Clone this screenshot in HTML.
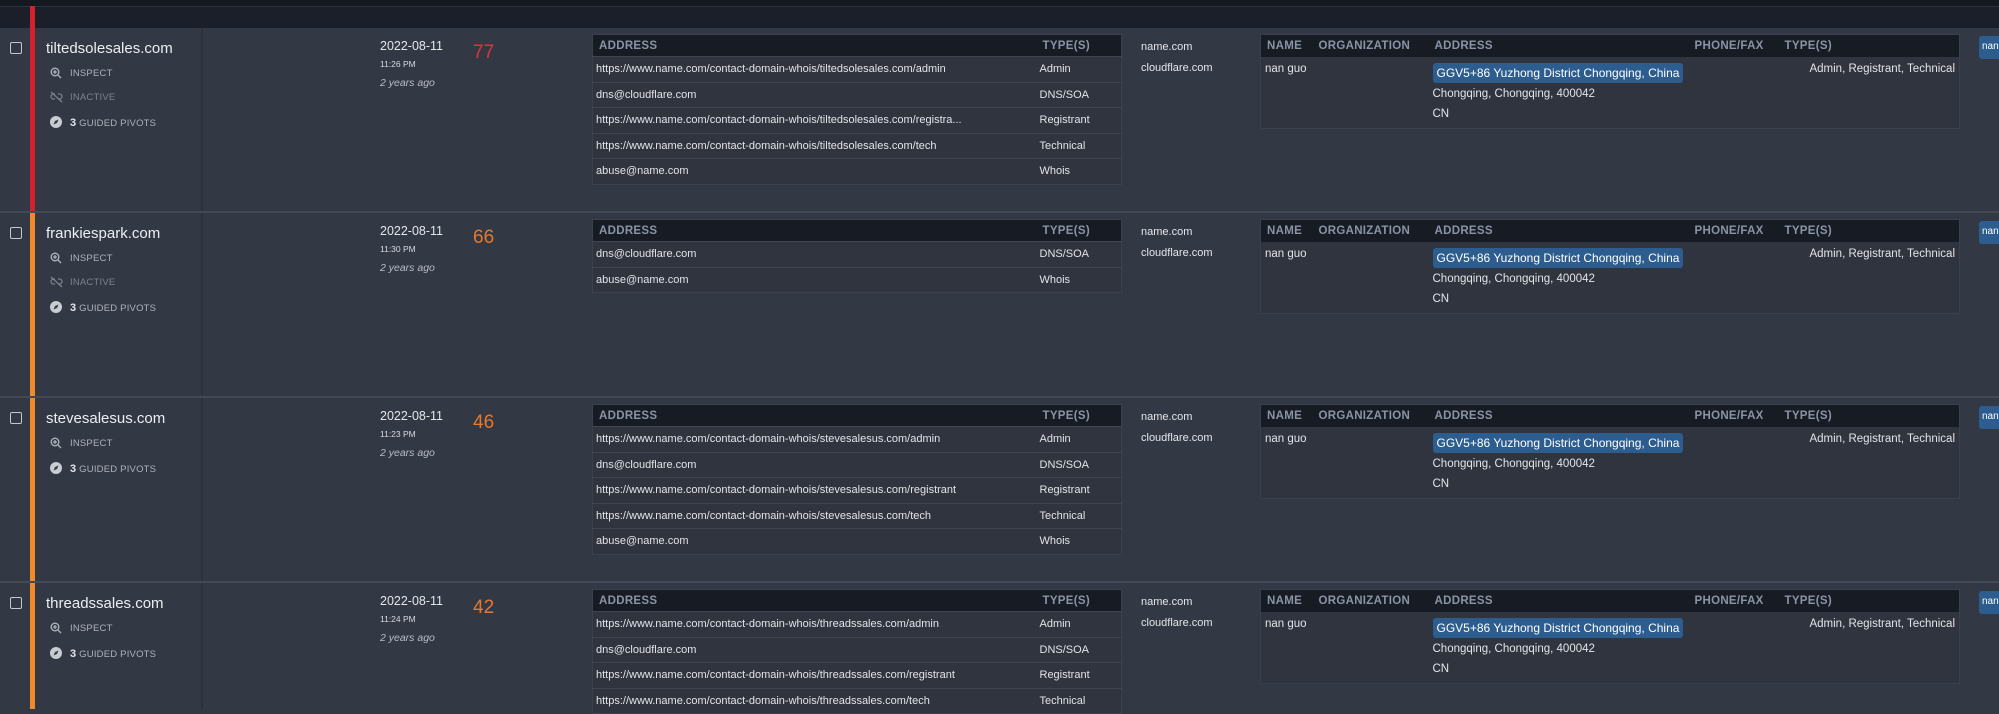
<!DOCTYPE html>
<html><head><meta charset="utf-8"><style>
*{margin:0;padding:0;box-sizing:border-box}
body{width:1999px;height:709px;overflow:hidden;background:#333845;font-family:"Liberation Sans",sans-serif;color:#e4e6ea;position:relative}
.a{position:absolute;white-space:nowrap}
.top{left:0;top:0;width:1999px;height:6px;background:#141821}
.hdr{left:0;top:6px;width:1999px;height:22px;background:#1b1f29;border-top:1px solid #2c313c}
.sep{left:0;width:1999px;height:2px;background:#444956}
.lcol{left:201px;top:28px;width:2px;height:681px;background:#2d313c}
.bar{left:30px;width:5px}
.cb{width:12px;height:12px;border:1.5px solid #c4c7cc;border-radius:2px}
.dom{font-size:15px;color:#eceef1}
.sm{font-size:9.5px;color:#aeb2ba;letter-spacing:.2px}
.dim{color:#7d828c}
.date{font-size:12.5px}
.time{font-size:8.5px;color:#d8dade}
.ago{font-size:10.5px;font-style:italic;color:#b8bcc4}
.score{font-size:19px}
table{border-collapse:collapse;font-size:11px;color:#e2e4e8}
th{background:#171b24;color:#8a94a6;text-align:left;font-size:11.5px;font-weight:bold;height:22px;padding:0 6px;letter-spacing:.3px}
td{height:25.5px;border-top:1px solid #404553;padding:0 3px;vertical-align:middle}
.ct{background:#30343f;border:1px solid #3b404c}
.rt td{border:none;vertical-align:top;padding:6px 4px 4px;height:auto;font-size:11.5px}
.chip{background:#2c5d8e;border-radius:3px;padding:3px 4px;color:#fff;font-size:12px}
.rchip{left:1979px;width:25px;height:23px;background:#2c5d8e;border-radius:3px;font-size:10px;padding:5px 3px;color:#fff}
</style></head><body>
<div class="a top"></div><div class="a hdr"></div>
<div class="a bar" style="top:6px;height:207px;background:#d4212b"></div>
<div class="a bar" style="top:213px;height:496px;background:#f08a2c"></div>
<div class="a lcol"></div>
<div class="a sep" style="top:211px"></div>
<div class="a sep" style="top:396px"></div>
<div class="a sep" style="top:581px"></div>

<!-- ROW 1 -->
<div class="a cb" style="left:10px;top:42px"></div>
<div class="a dom" style="left:46px;top:40px">tiltedsolesales.com</div>
<svg class="a" style="left:50px;top:67px" width="12" height="12" viewBox="0 0 12 12"><circle cx="5" cy="5" r="3.8" stroke="#aeb2ba" stroke-width="1.4" fill="none"/><path d="M8 8l3 3M5 3v4M3 5h4" stroke="#aeb2ba" stroke-width="1.3"/></svg>
<div class="a sm" style="left:70px;top:68px">INSPECT</div>
<svg class="a" style="left:50px;top:91px" width="13" height="12" viewBox="0 0 13 12"><path d="M5 3H3.5a2.5 2.5 0 0 0 0 5H5M8 3h1.5a2.5 2.5 0 0 1 0 5H8M1 1l11 10" stroke="#7d828c" stroke-width="1.2" fill="none"/></svg>
<div class="a sm dim" style="left:70px;top:92px">INACTIVE</div>
<svg class="a" style="left:50px;top:116px" width="12" height="12" viewBox="0 0 12 12"><circle cx="6" cy="6" r="6" fill="#c8cbd0"/><path d="M8.5 3.5L5 5 3.5 8.5 7 7z" fill="#333845"/></svg>
<div class="a sm" style="left:70px;top:117px"><b style="font-size:11px;color:#e4e6ea">3</b> GUIDED PIVOTS</div>
<div class="a date" style="left:380px;top:39px">2022-08-11</div>
<div class="a time" style="left:380px;top:59px">11:26 PM</div>
<div class="a ago" style="left:380px;top:77px">2 years ago</div>
<div class="a score" style="left:473px;top:42px;color:#d8343b">77</div>
<div class="a" style="left:592px;top:34px;width:530px">
<table class="ct" style="width:530px"><tr><th>ADDRESS</th><th style="width:85px">TYPE(S)</th></tr>
<tr><td>https://www.name.com/contact-domain-whois/tiltedsolesales.com/admin</td><td>Admin</td></tr>
<tr><td>dns@cloudflare.com</td><td>DNS/SOA</td></tr>
<tr><td>https://www.name.com/contact-domain-whois/tiltedsolesales.com/registra...</td><td>Registrant</td></tr>
<tr><td>https://www.name.com/contact-domain-whois/tiltedsolesales.com/tech</td><td>Technical</td></tr>
<tr><td>abuse@name.com</td><td>Whois</td></tr></table></div>
<div class="a" style="left:1141px;top:37px;font-size:11px;line-height:21px">name.com<br>cloudflare.com</div>
<div class="a" style="left:1260px;top:34px;width:700px">
<table class="ct rt" style="width:700px"><tr><th style="width:52px">NAME</th><th style="width:116px">ORGANIZATION</th><th style="width:260px">ADDRESS</th><th style="width:90px">PHONE/FAX</th><th>TYPE(S)</th></tr>
<tr><td>nan guo</td><td></td><td style="line-height:20px"><span class="chip">GGV5+86 Yuzhong District Chongqing, China</span><br>Chongqing, Chongqing, 400042<br>CN</td><td></td><td style="text-align:right">Admin, Registrant, Technical</td></tr></table></div>
<div class="a rchip" style="top:36px">nan</div>

<!-- ROW 2 -->
<div class="a cb" style="left:10px;top:227px"></div>
<div class="a dom" style="left:46px;top:225px">frankiespark.com</div>
<svg class="a" style="left:50px;top:252px" width="12" height="12" viewBox="0 0 12 12"><circle cx="5" cy="5" r="3.8" stroke="#aeb2ba" stroke-width="1.4" fill="none"/><path d="M8 8l3 3M5 3v4M3 5h4" stroke="#aeb2ba" stroke-width="1.3"/></svg>
<div class="a sm" style="left:70px;top:253px">INSPECT</div>
<svg class="a" style="left:50px;top:276px" width="13" height="12" viewBox="0 0 13 12"><path d="M5 3H3.5a2.5 2.5 0 0 0 0 5H5M8 3h1.5a2.5 2.5 0 0 1 0 5H8M1 1l11 10" stroke="#7d828c" stroke-width="1.2" fill="none"/></svg>
<div class="a sm dim" style="left:70px;top:277px">INACTIVE</div>
<svg class="a" style="left:50px;top:301px" width="12" height="12" viewBox="0 0 12 12"><circle cx="6" cy="6" r="6" fill="#c8cbd0"/><path d="M8.5 3.5L5 5 3.5 8.5 7 7z" fill="#333845"/></svg>
<div class="a sm" style="left:70px;top:302px"><b style="font-size:11px;color:#e4e6ea">3</b> GUIDED PIVOTS</div>
<div class="a date" style="left:380px;top:224px">2022-08-11</div>
<div class="a time" style="left:380px;top:244px">11:30 PM</div>
<div class="a ago" style="left:380px;top:262px">2 years ago</div>
<div class="a score" style="left:473px;top:227px;color:#e8782a">66</div>
<div class="a" style="left:592px;top:219px;width:530px">
<table class="ct" style="width:530px"><tr><th>ADDRESS</th><th style="width:85px">TYPE(S)</th></tr>
<tr><td>dns@cloudflare.com</td><td>DNS/SOA</td></tr>
<tr><td>abuse@name.com</td><td>Whois</td></tr></table></div>
<div class="a" style="left:1141px;top:222px;font-size:11px;line-height:21px">name.com<br>cloudflare.com</div>
<div class="a" style="left:1260px;top:219px;width:700px">
<table class="ct rt" style="width:700px"><tr><th style="width:52px">NAME</th><th style="width:116px">ORGANIZATION</th><th style="width:260px">ADDRESS</th><th style="width:90px">PHONE/FAX</th><th>TYPE(S)</th></tr>
<tr><td>nan guo</td><td></td><td style="line-height:20px"><span class="chip">GGV5+86 Yuzhong District Chongqing, China</span><br>Chongqing, Chongqing, 400042<br>CN</td><td></td><td style="text-align:right">Admin, Registrant, Technical</td></tr></table></div>
<div class="a rchip" style="top:221px">nan</div>

<!-- ROW 3 -->
<div class="a cb" style="left:10px;top:412px"></div>
<div class="a dom" style="left:46px;top:410px">stevesalesus.com</div>
<svg class="a" style="left:50px;top:437px" width="12" height="12" viewBox="0 0 12 12"><circle cx="5" cy="5" r="3.8" stroke="#aeb2ba" stroke-width="1.4" fill="none"/><path d="M8 8l3 3M5 3v4M3 5h4" stroke="#aeb2ba" stroke-width="1.3"/></svg>
<div class="a sm" style="left:70px;top:438px">INSPECT</div>
<svg class="a" style="left:50px;top:462px" width="12" height="12" viewBox="0 0 12 12"><circle cx="6" cy="6" r="6" fill="#c8cbd0"/><path d="M8.5 3.5L5 5 3.5 8.5 7 7z" fill="#333845"/></svg>
<div class="a sm" style="left:70px;top:463px"><b style="font-size:11px;color:#e4e6ea">3</b> GUIDED PIVOTS</div>
<div class="a date" style="left:380px;top:409px">2022-08-11</div>
<div class="a time" style="left:380px;top:429px">11:23 PM</div>
<div class="a ago" style="left:380px;top:447px">2 years ago</div>
<div class="a score" style="left:473px;top:412px;color:#e8782a">46</div>
<div class="a" style="left:592px;top:404px;width:530px">
<table class="ct" style="width:530px"><tr><th>ADDRESS</th><th style="width:85px">TYPE(S)</th></tr>
<tr><td>https://www.name.com/contact-domain-whois/stevesalesus.com/admin</td><td>Admin</td></tr>
<tr><td>dns@cloudflare.com</td><td>DNS/SOA</td></tr>
<tr><td>https://www.name.com/contact-domain-whois/stevesalesus.com/registrant</td><td>Registrant</td></tr>
<tr><td>https://www.name.com/contact-domain-whois/stevesalesus.com/tech</td><td>Technical</td></tr>
<tr><td>abuse@name.com</td><td>Whois</td></tr></table></div>
<div class="a" style="left:1141px;top:407px;font-size:11px;line-height:21px">name.com<br>cloudflare.com</div>
<div class="a" style="left:1260px;top:404px;width:700px">
<table class="ct rt" style="width:700px"><tr><th style="width:52px">NAME</th><th style="width:116px">ORGANIZATION</th><th style="width:260px">ADDRESS</th><th style="width:90px">PHONE/FAX</th><th>TYPE(S)</th></tr>
<tr><td>nan guo</td><td></td><td style="line-height:20px"><span class="chip">GGV5+86 Yuzhong District Chongqing, China</span><br>Chongqing, Chongqing, 400042<br>CN</td><td></td><td style="text-align:right">Admin, Registrant, Technical</td></tr></table></div>
<div class="a rchip" style="top:406px">nan</div>

<!-- ROW 4 -->
<div class="a cb" style="left:10px;top:597px"></div>
<div class="a dom" style="left:46px;top:595px">threadssales.com</div>
<svg class="a" style="left:50px;top:622px" width="12" height="12" viewBox="0 0 12 12"><circle cx="5" cy="5" r="3.8" stroke="#aeb2ba" stroke-width="1.4" fill="none"/><path d="M8 8l3 3M5 3v4M3 5h4" stroke="#aeb2ba" stroke-width="1.3"/></svg>
<div class="a sm" style="left:70px;top:623px">INSPECT</div>
<svg class="a" style="left:50px;top:647px" width="12" height="12" viewBox="0 0 12 12"><circle cx="6" cy="6" r="6" fill="#c8cbd0"/><path d="M8.5 3.5L5 5 3.5 8.5 7 7z" fill="#333845"/></svg>
<div class="a sm" style="left:70px;top:648px"><b style="font-size:11px;color:#e4e6ea">3</b> GUIDED PIVOTS</div>
<div class="a date" style="left:380px;top:594px">2022-08-11</div>
<div class="a time" style="left:380px;top:614px">11:24 PM</div>
<div class="a ago" style="left:380px;top:632px">2 years ago</div>
<div class="a score" style="left:473px;top:597px;color:#e8782a">42</div>
<div class="a" style="left:592px;top:589px;width:530px">
<table class="ct" style="width:530px"><tr><th>ADDRESS</th><th style="width:85px">TYPE(S)</th></tr>
<tr><td>https://www.name.com/contact-domain-whois/threadssales.com/admin</td><td>Admin</td></tr>
<tr><td>dns@cloudflare.com</td><td>DNS/SOA</td></tr>
<tr><td>https://www.name.com/contact-domain-whois/threadssales.com/registrant</td><td>Registrant</td></tr>
<tr><td>https://www.name.com/contact-domain-whois/threadssales.com/tech</td><td>Technical</td></tr>
</table></div>
<div class="a" style="left:1141px;top:592px;font-size:11px;line-height:21px">name.com<br>cloudflare.com</div>
<div class="a" style="left:1260px;top:589px;width:700px">
<table class="ct rt" style="width:700px"><tr><th style="width:52px">NAME</th><th style="width:116px">ORGANIZATION</th><th style="width:260px">ADDRESS</th><th style="width:90px">PHONE/FAX</th><th>TYPE(S)</th></tr>
<tr><td>nan guo</td><td></td><td style="line-height:20px"><span class="chip">GGV5+86 Yuzhong District Chongqing, China</span><br>Chongqing, Chongqing, 400042<br>CN</td><td></td><td style="text-align:right">Admin, Registrant, Technical</td></tr></table></div>
<div class="a rchip" style="top:591px">nan</div>
</body></html>
